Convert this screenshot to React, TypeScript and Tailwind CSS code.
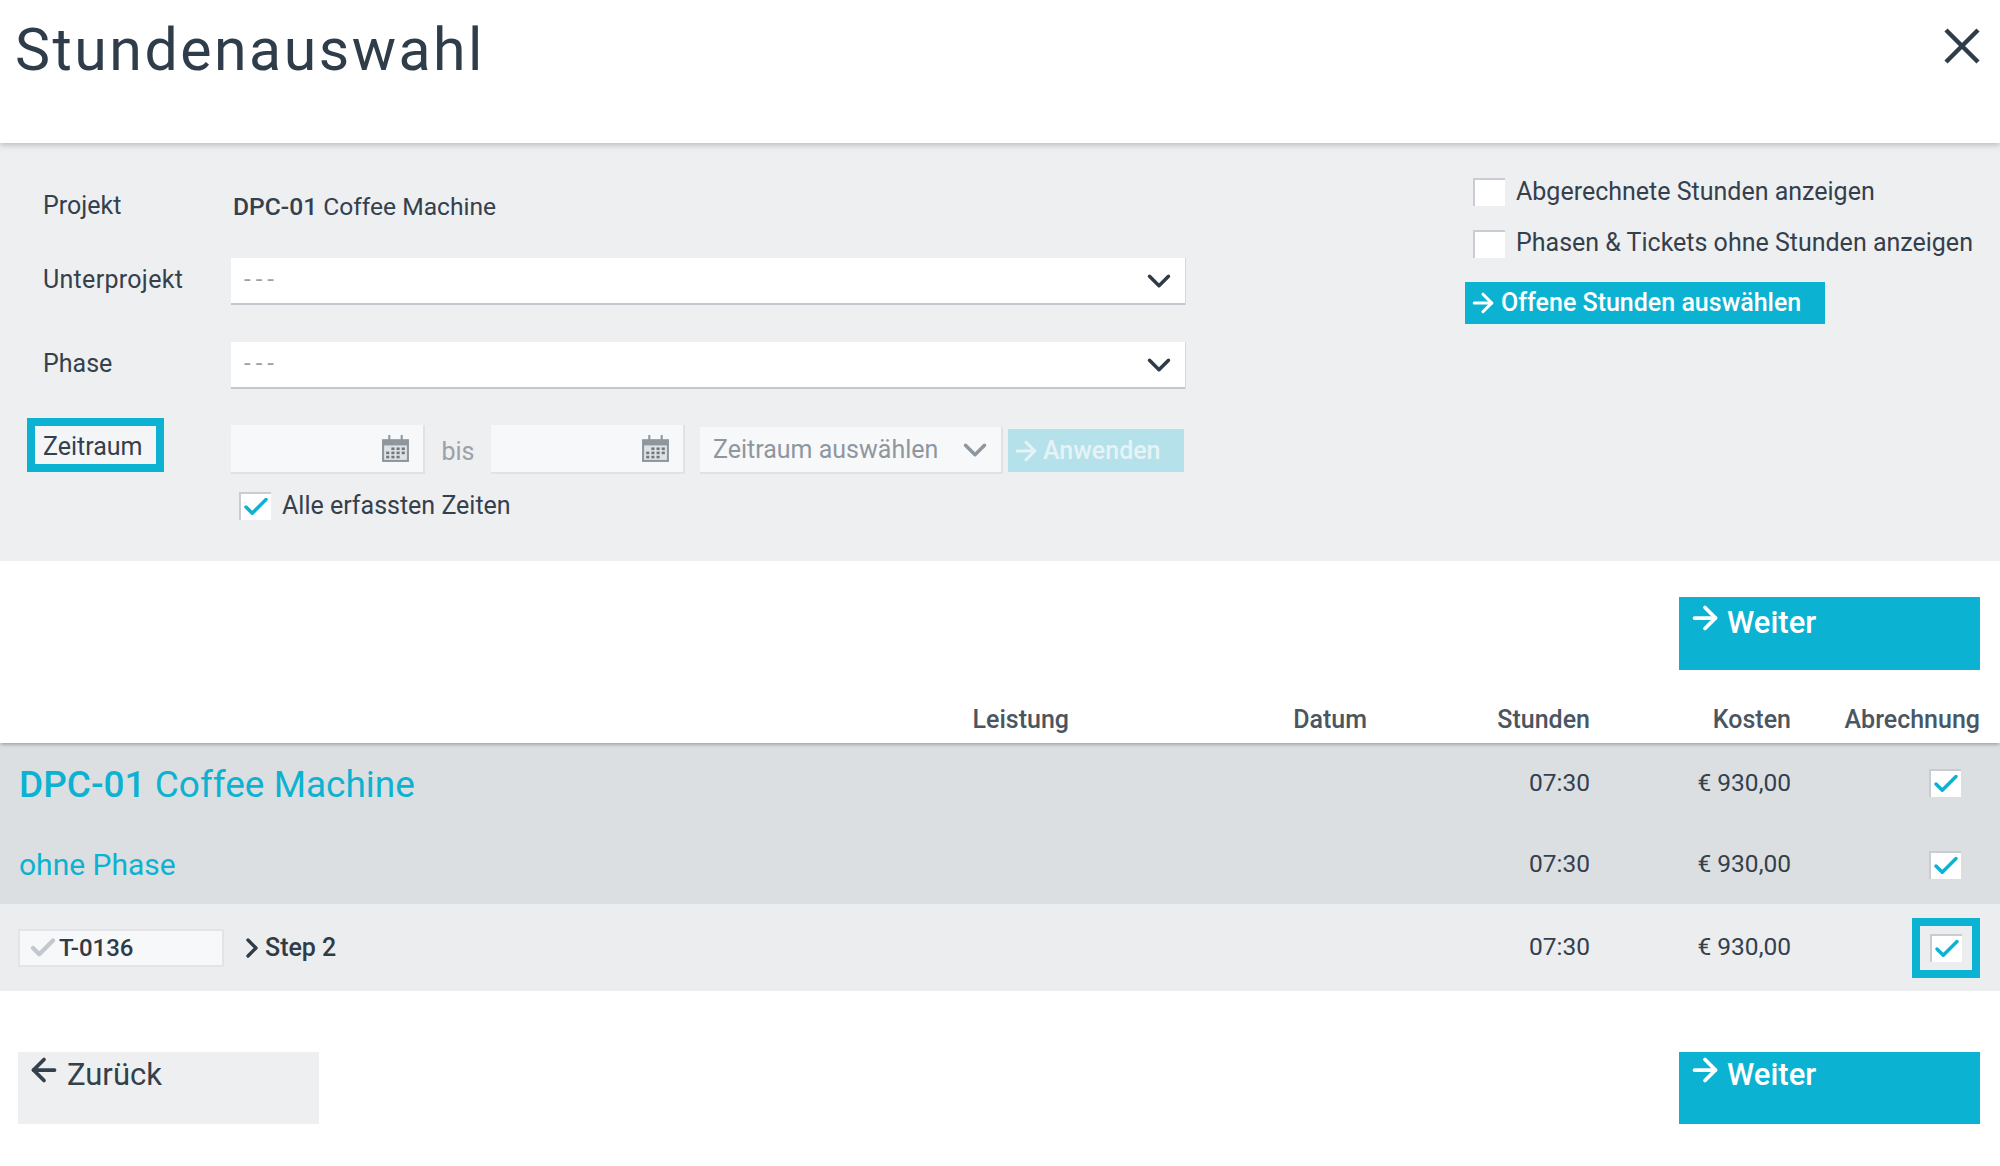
import { ArrowLeft, ArrowRight, Check, ChevronDown, ChevronRight } from "lucide-react";

const font = "font-['Roboto',sans-serif]";

const Checkbox = ({ checked = false }: { checked?: boolean }) => (
  <div className="flex h-[28px] w-[32px] shrink-0 items-center justify-center border-t-2 border-l-2 border-[#c9cdd2] bg-white">
    {checked && <Check className="h-[30px] w-[30px] shrink-0 text-[#0cb2d1]" strokeWidth={2.8} />}
  </div>
);

const CalendarIcon = () => (
  <svg width="29" height="29" viewBox="0 0 28 28" className="shrink-0">
    <rect x="1" y="5" width="26" height="22" fill="#8f979e" />
    <rect x="3" y="11" width="22" height="14" fill="#dfe2e5" />
    <rect x="7" y="1" width="2" height="7" fill="#8f979e" />
    <rect x="19" y="1" width="2" height="7" fill="#8f979e" />
    <g fill="#6f777f">
      <rect x="10" y="13" width="3" height="2.5" />
      <rect x="15" y="13" width="3" height="2.5" />
      <rect x="20" y="13" width="3" height="2.5" />
      <rect x="5" y="17" width="3" height="2.5" />
      <rect x="10" y="17" width="3" height="2.5" />
      <rect x="15" y="17" width="3" height="2.5" />
      <rect x="20" y="17" width="3" height="2.5" />
      <rect x="5" y="21" width="3" height="2.5" />
      <rect x="10" y="21" width="3" height="2.5" />
      <rect x="15" y="21" width="3" height="2.5" />
    </g>
  </svg>
);

const SelectBox = () => (
  <div className="flex h-[47px] w-[954px] items-center justify-between border-b-2 border-[#c3c8ce] bg-white pr-[7px] pl-[13px] shadow-[1px_0_0_#d5d8dc]">
    <span className="pb-[3px] text-[24px] tracking-[5px] text-[#9aa1a8]">---</span>
    <ChevronDown className="h-[38px] w-[38px] text-[#2f3b47]" strokeWidth={2.2} />
  </div>
);

const DateBox = () => (
  <div className="flex h-[49px] w-[194px] items-center justify-end border-r-2 border-b-2 border-[#e0e2e5] bg-[#f7f8fa] pr-[13px]">
    <CalendarIcon />
  </div>
);

const BigButton = ({ label, back = false, tall = false }: { label: string; back?: boolean; tall?: boolean }) => (
  <button
    className={`flex w-[301px] items-start pl-[8px] text-[31px] ${tall ? "h-[73px] pt-[3px]" : "h-[72px] pt-0"} ${
      back ? "bg-[#eeeff1] text-[#34404c]" : "bg-[#0cb2d1] font-medium text-white"
    }`}
  >
    {back ? (
      <ArrowLeft className="mr-[5px] h-[36px] w-[36px]" strokeWidth={2.5} />
    ) : (
      <ArrowRight className="mr-[4px] h-[36px] w-[36px]" strokeWidth={2.5} />
    )}
    {label}
  </button>
);

const rowGrid = "grid grid-cols-[1069px_298px_223px_201px_189px] items-center pr-[20px]";

export default function App() {
  return (
    <div className={`h-[1166px] w-full overflow-hidden bg-white text-[#34404c] ${font}`}>
      {/* header */}
      <div className="relative z-10 flex h-[143px] items-start justify-between pr-[20px] pl-[15px] shadow-[0_2px_6px_rgba(80,90,100,0.35)]">
        <h1 className="mt-[16px] text-[59px] leading-[68px] font-normal tracking-[2.5px] text-[#2f3d4b]">
          Stundenauswahl
        </h1>
        <svg width="36" height="36" viewBox="0 0 36 36" className="mt-[28px]">
          <path d="M2 2 L34 34 M34 2 L2 34" stroke="#2f3d4b" strokeWidth="4.5" fill="none" />
        </svg>
      </div>

      {/* filter */}
      <div className="flex h-[418px] justify-between bg-[#eeeff1] pr-[20px] text-[25px]">
        <div className="pt-[39px]">
          <div className="flex h-[46px] items-center">
            <span className="w-[231px] pt-[2px] pl-[43px]">Projekt</span>
            <span className="pt-[4px] pl-[2px] text-[24.6px]">
              <span className="font-medium">DPC-01</span> Coffee Machine
            </span>
          </div>
          <div className="mt-[30px] flex items-center">
            <span className="w-[231px] pb-[3px] pl-[43px] tracking-[0.3px]">Unterprojekt</span>
            <SelectBox />
          </div>
          <div className="mt-[37px] flex items-center">
            <span className="w-[231px] pb-[4px] pl-[43px]">Phase</span>
            <SelectBox />
          </div>
          <div className="mt-[29px] flex h-[55px] items-start">
            <div className="w-[231px] pl-[27px]">
              <div className="flex h-[54px] w-[137px] items-center border-[8px] border-[#0cb2d1] bg-[#f4f5f7] pt-[3px] pl-[8px]">
                Zeitraum
              </div>
            </div>
            <div className="mt-[7px] flex items-start">
              <DateBox />
              <span className="w-[66px] pt-[8px] text-center text-[#9aa1a8]">bis</span>
              <DateBox />
              <div className="mt-[2px] ml-[15px] flex h-[47px] w-[303px] items-center justify-between border-r-2 border-b-2 border-[#e0e2e5] bg-[#f7f8fa] pr-[7px] pl-[13px] text-[#8f979e]">
                Zeitraum auswählen
                <ChevronDown className="h-[38px] w-[38px]" strokeWidth={2.2} />
              </div>
              <div className="mt-[4px] ml-[5px] flex h-[43px] w-[176px] items-center bg-[#b5e1eb] pl-[3px] font-medium text-[#e6f3f6]">
                <ArrowRight className="mr-[2px] h-[30px] w-[30px]" strokeWidth={2.5} />
                Anwenden
              </div>
            </div>
          </div>
          <div className="mt-[19px] flex h-[28px] items-center pl-[239px]">
            <Checkbox checked />
            <span className="ml-[11px]">Alle erfassten Zeiten</span>
          </div>
        </div>

        <div className="w-[515px] pt-[35px]">
          <div className="flex h-[28px] items-center pl-[8px]">
            <Checkbox />
            <span className="ml-[11px] pb-[1px]">Abgerechnete Stunden anzeigen</span>
          </div>
          <div className="mt-[24px] flex h-[28px] items-center pl-[8px]">
            <Checkbox />
            <span className="ml-[11px] pb-[2px] whitespace-nowrap">Phasen &amp; Tickets ohne Stunden anzeigen</span>
          </div>
          <div className="mt-[24px] flex h-[42px] w-[360px] items-center bg-[#0cb2d1] pl-[3px] font-medium text-white">
            <ArrowRight className="mr-[3px] h-[30px] w-[30px]" strokeWidth={2.5} />
            Offene Stunden auswählen
          </div>
        </div>
      </div>

      {/* next */}
      <div className="flex justify-end pt-[36px] pr-[20px]">
        <BigButton label="Weiter" tall />
      </div>

      {/* table header */}
      <div className={`${rowGrid} relative z-10 mt-[31px] h-[42px] pb-[5px] text-right text-[25px] font-medium text-[#4a5661] shadow-[0_3px_3px_-1px_rgba(80,90,100,0.4)]`}>
        <span>Leistung</span>
        <span>Datum</span>
        <span>Stunden</span>
        <span>Kosten</span>
        <span>Abrechnung</span>
      </div>

      {/* project rows */}
      <div className="bg-[#dcdfe2]">
        <div className={`${rowGrid} h-[80px] text-right text-[24.5px]`}>
          <div className="pt-[4px] pl-[19px] text-left text-[37px] text-[#0cb2d1]">
            <span className="font-medium">DPC-01</span> Coffee Machine
          </div>
          <span />
          <span>07:30</span>
          <span>€ 930,00</span>
          <div className="flex justify-end pr-[19px]">
            <Checkbox checked />
          </div>
        </div>
        <div className={`${rowGrid} h-[81px] pt-[2px] text-right text-[24.5px]`}>
          <div className="pl-[19px] text-left text-[30px] text-[#0cb2d1]">ohne Phase</div>
          <span />
          <span>07:30</span>
          <span>€ 930,00</span>
          <div className="flex justify-end pr-[19px]">
            <Checkbox checked />
          </div>
        </div>
      </div>

      {/* ticket row */}
      <div className={`${rowGrid} h-[87px] bg-[#ecedef] text-right text-[24.5px]`}>
        <div className="flex items-center pl-[18px] text-left">
          <div className="flex h-[38px] w-[206px] items-center border-2 border-[#e2e4e7] bg-[#f7f8fa] pl-[8px] text-[24px] font-medium text-[#2f3b47]">
            <Check className="h-[30px] w-[30px] text-[#c3c8ce]" strokeWidth={3.5} />
            <span className="ml-[1px]">T-0136</span>
          </div>
          <ChevronRight className="ml-[12px] h-[32px] w-[32px] text-[#2f3b47]" strokeWidth={2.5} />
          <span className="-ml-[3px] text-[25px] font-medium text-[#2f3b47]">Step 2</span>
        </div>
        <span />
        <span>07:30</span>
        <span>€ 930,00</span>
        <div className="flex justify-end">
          <div className="flex h-[60px] w-[68px] items-center justify-center border-[8px] border-[#0cb2d1]">
            <Checkbox checked />
          </div>
        </div>
      </div>

      {/* footer */}
      <div className="flex justify-between pt-[61px] pr-[20px] pl-[18px]">
        <BigButton label="Zurück" back />
        <BigButton label="Weiter" />
      </div>
    </div>
  );
}
